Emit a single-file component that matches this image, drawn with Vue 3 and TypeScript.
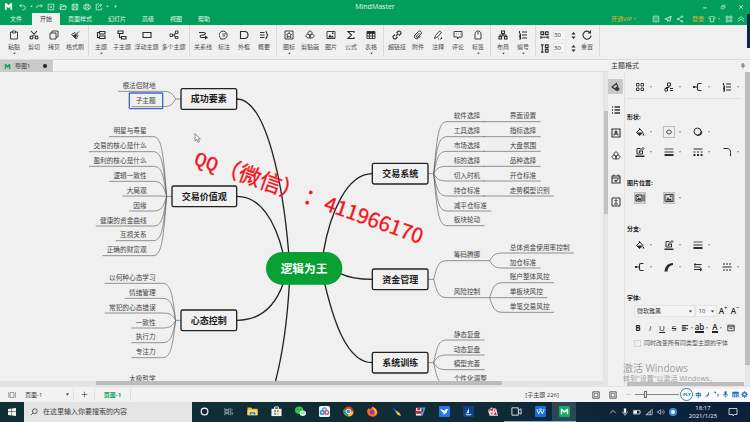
<script setup lang="ts">
import { h, ref } from 'vue'

interface Glyph { s?: string; f?: string; w?: number }

const glyphs: Record<string, Glyph> = {
  logo: { f: 'M2 3h4l4 4 4-4h4v14h-4v-7l-4 4-4-4v7H2z' },
  undo: { s: 'M6 3 2 7l4 4M2 7h9a5 5 0 0 1 0 10H8' },
  redo: { s: 'M14 3l4 4-4 4M18 7H9a5 5 0 0 0-5 6' },
  add: { s: 'M3 3h14v14H3zM10 7v6M7 10h6' },
  open: { s: 'M3 16V4h5l2 2h6v3M3 16l3-7h13l-3 7z' },
  save: { s: 'M3 3h14v14H3zM6 3v5h8V3M6 17v-5h8v5' },
  print: { s: 'M6 7V3h8v4M6 14H2V7h16v7h-4M6 12h8v5H6z' },
  share: { s: 'M9 3H3v14h14v-5M8 12c0-5 3-7 8-7M13 2l4 3-4 4' },
  more: { s: 'M6 5h8', f: 'M5 9h10l-5 6z' },
  caret: { f: 'M5 7h10l-5 6z' },
  min: { s: 'M4 13h12', w: 3 },
  restore: { s: 'M4 8h9v8H4zM8 8V4h9v8h-4' },
  close: { s: 'M4 4l12 12M16 4 4 16', w: 2.6 },
  fit: { s: 'M3 3h14v14H3zM7 9V7h2M13 11v2h-2M11 7h2v2M9 13H7v-2' },
  send: { s: 'M2 10 18 3l-3 13-6-4zM18 3 9 12v5' },
  nodes: { s: 'M7 9l6-4M7 11l6 4M3 10a2 2 0 1 0 4 0 2 2 0 1 0-4 0M13 4a2 2 0 1 0 4 0 2 2 0 1 0-4 0M13 16a2 2 0 1 0 4 0 2 2 0 1 0-4 0' },
  shirt: { s: 'M7 3 2 6l2 4 2-1v8h8V9l2 1 2-4-5-3c-1 3-5 3-6 0z' },
  grid: { s: 'M3 3h5v5H3zM12 3h5v5h-5zM3 12h5v5H3zM12 12h5v5h-5z' },
  up: { s: 'M2 11l8-7 8 7M2 17l8-7 8 7' },
  paste: { s: 'M6 4H3v14h14V4h-3M7 2h6v4H7z' },
  cut: { s: 'M4 2l10 11M16 2 6 13M2 15a3 3 0 1 0 6 0 3 3 0 1 0-6 0M12 15a3 3 0 1 0 6 0 3 3 0 1 0-6 0', w: 2.2 },
  copy: { s: 'M2 6h12v12H2zM6 6V2h12v12h-4' },
  brush: { s: 'M3 9l7-4 6 6-4 7zM13 8l5-5', f: 'M6 11l5-3 3 3-3 5z' },
  topic: { s: 'M7 3h11v5H7zM7 12h11v5H7zM7 5H3v10h4', w: 2.2 },
  subtopic: { s: 'M2 2h10v5H2zM9 13h9v5H9zM5 7v8h4', w: 2.2 },
  float: { s: 'M2 5h16v10H2z', w: 2.2 },
  multi: { s: 'M7 10h3l3-5M10 10h3M10 10l3 6M2 8h5v5H2zM13 2h5v5h-5zM13 13h5v4h-5z' },
  relation: { s: 'M2 5h9c5 0 5 4 0 5H8c-5 1-5 5 0 5h9M14 12l4 3-4 3', w: 2.2 },
  callout: { s: 'M4 17a8 8 0 1 1 6 1H3zM7 8h7M7 12h5' },
  frame: { s: 'M3 3h8a7 7 0 0 1 0 14H3z', w: 2.2 },
  summary: { s: 'M2 5h9M2 10h9M2 15h9M13 3c4 0 1 6 5 7-4 1-1 7-5 7', w: 2.2 },
  marker: { s: 'M2 2h16v16H2zM10 5l2 3 3 1-2 2 1 4-4-2-4 2 1-4-2-2 3-1z' },
  clip: { s: 'M10 10C4 10 5 2 10 2s6 8 0 8zM9 10C4 5-1 12 4 15s6-2 6-5c0 3 1 8 6 5s0-10-5-5M10 11v7' },
  image: { s: 'M2 3h16v14H2z', f: 'M4 15l4-6 3 4 2-2 3 4zM12 5h3v3h-3z' },
  sum: { s: 'M16 6V3H4l7 7-7 7h12v-3', w: 2.2 },
  table: { s: 'M2 3h16v14H2zM2 7h16M2 12h16M7 7v10M13 7v10', f: 'M2 3h16v4H2z' },
  link: { s: 'M8 12l5-5M9 6l3-3c3-3 8 2 5 5l-3 3M11 14l-3 3c-3 3-8-2-5-5l3-3', w: 2.2 },
  attach: { s: 'M13 6l-6 6c-1 2 1 4 3 2l6-6c3-4-2-8-5-5l-7 7c-4 5 3 10 7 6l4-4', w: 2 },
  note: { s: 'M3 17l2-6 8-9 4 3-8 9zM10 18h2M14 18h2M17 14v4' },
  comment: { s: 'M2 3h16v11h-6l-3 4v-4H2zM6 8h1M10 8h1M14 8h1' },
  tag: { s: 'M4 8c0-8 12-8 12 0v10H4zM10 4v5' },
  layout: { s: 'M7 2h6v5H7zM2 13h5v5H2zM13 13h5v5h-5zM10 7v6M4 13v-3h12v3', w: 2.2 },
  number: { s: 'M8 4h10M8 10h10M8 16h10M3 2v4M2 8h3v4H2M2 14h3v4H2', w: 2.2 },
  hgap: { s: 'M2 2h6v6H2zM12 2h6v6h-6zM2 14h16M2 11v6M18 11v6', w: 2.4 },
  vgap: { s: 'M12 2h6v6h-6zM12 12h6v6h-6zM5 3v14M2 2h6M2 18h6', w: 2.4 },
  spin: { f: 'M10 0l6 7H4zM10 20l6-7H4z' },
  reset: { s: 'M16 5a8 8 0 1 0 2 6M17 1v5h-5', w: 2.2 },
  pin: { s: 'M6 3h8M7 3v8M13 3v8M4 11h12M10 11v7', w: 2 },
  style: { s: 'M2 10l9-7 3 8-4 5zM11 11a3 3 0 1 0 5 3zM6 12l8 6', w: 2.2 },
  list: { s: 'M7 4h11M7 10h11M7 16h11M2 4h2M2 10h2M2 16h2', w: 2.6 },
  badge: { s: 'M2 2h16v16H2zM6 15c0-5 8-5 8 0M8 8a2 2 0 1 0 4 0 2 2 0 1 0-4 0', w: 2.2 },
  task: { s: 'M2 4h16v14H2zM2 8h16M6 1v4M14 1v4M7 12l3 3 4-5', w: 2.2 },
  upload: { s: 'M2 2h16v16H2zM10 13V6M7 8l3-3 3 3M6 14h8', w: 2 },
  tree: { s: 'M7 2h6v6H7zM2 13h5v5H2zM12 13h6M12 17h6M10 8v3H4v2', w: 2 },
  branch: { s: 'M1 10h8M17 3h-5c-2 0-3 1-3 3v8c0 2 1 3 3 3h5', w: 2.2, f: 'M0 8h4v4H0z' },
  fill: { s: 'M3 11l7-7 6 7-7 6zM8 2l3 4', f: 'M4 11h11l-6 6zM17 12l2 5h-4z', w: 2 },
  oval: { s: 'M5 10c2-5 8-5 10 0-2 5-8 5-10 0z', w: 2 },
  shadow: { s: 'M2 9a7 7 0 1 0 14 0 7 7 0 1 0-14 0', f: 'M17 6c5 9-5 15-11 10 6 1 11-3 11-10z', w: 2 },
  pen: { s: 'M15 8v6H4V3h7M8 11l1-3 7-7 2 2-7 7z', f: 'M1 17h18v3H1z', w: 2 },
  lines: { s: 'M1 4h18', f: 'M1 9h18v2H1zM1 14h18v4H1z', w: 1.6 },
  dashes: { s: 'M1 4h18M1 10h4M8 10h4M15 10h4', f: 'M1 14h4v4H1zM8 14h4v4H8zM15 14h4v4h-4z', w: 2 },
  dashes2: { s: 'M2 4h4M8 4h4M14 4h4M1 10h18M2 16h4M8 16h4M14 16h4', w: 2.4 },
  corner: { s: 'M3 3h7c5 0 7 3 7 8v7', w: 2 },
  picleft: { s: 'M2 4h12v12H2z', f: 'M4 14l3-5 3 3 2-2v4zM4 6h3v2H4zM17 3h2v14h-2z', w: 2 },
  taper: { f: 'M1 19C2 9 7 3 18 2v4C11 7 8 11 7 19z' },
  arrows: { s: 'M5 3 2 5l3 2M2 5h15M2 10h13M2 15h15M14 12l4 3-4 3', w: 2 },
  align: { s: 'M2 4h16M2 8h10M2 12h16M2 16h10', w: 2.4 },
  calendar: { s: 'M2 3h16v14H2zM2 7h16M6 11h8', w: 2 },
  board: { s: 'M5 4h10v12H5zM1 4h1v12H1M18 4h1v12h-1' },
  plus: { s: 'M10 2v16M2 10h16' },
  full: { s: 'M2 2h16v16H2zM6 6h3M6 6v3M14 6h-3M14 6v3M6 14h3M6 14v-3M14 14h-3M14 14v-3', w: 2 },
  minus: { s: 'M2 10h16' },
  moon: { f: 'M12 2c6 8-1 17-10 13 6 0 10-5 10-13z' },
  comma: { f: 'M3 4a3 3 0 1 1 5 3zM12 9c6-1 6 6 0 9 2-4 2-5 0-9z' },
  mic: { s: 'M4 9c0 8 12 8 12 0M10 15v4', f: 'M7 1h6v11H7z' },
  gear: { s: 'M5 10a5 5 0 1 0 10 0 5 5 0 1 0-10 0M10 1v3M10 16v3M1 10h3M16 10h3M4 4l2 2M14 14l2 2M16 4l-2 2M6 14l-2 2', w: 3.4 },
  windows: { f: 'M2 4l7-1v6H2zM10 3l8-1v7h-8zM2 10h7v7l-7-1zM10 10h8v8l-8-1z' },
  search: { s: 'M6 8a6 6 0 1 0 12 0A6 6 0 1 0 6 8M8 12l-6 6', w: 1.8 },
  chevron: { s: 'M3 13l7-7 7 7' },
  battery: { s: 'M1 6h16v9H1zM19 9v3', f: 'M2 7h8v7H2z' },
  wifi: { s: 'M2 17 18 3v14zM6 17v-3M10 17v-7M14 17V7', w: 1.4 },
  volume: { s: 'M2 8h3l4-4v12l-4-4H2zM12 7c2 2 2 4 0 6M15 4c4 4 4 8 0 12', w: 1.4 },
  notice: { s: 'M2 3h16v12h-5l-3 3v-3H2z', w: 1.6 },
}

const Ico = (p: { n: string }) => {
  const g = glyphs[p.n] ?? {}
  return h('svg', { viewBox: '0 0 20 20', class: 'ico', 'aria-hidden': 'true' }, [
    g.s ? h('path', { d: g.s, fill: 'none', stroke: 'currentColor', 'stroke-width': g.w ?? 1.8 }) : null,
    g.f ? h('path', { d: g.f, fill: 'currentColor' }) : null,
  ])
}
Ico.props = ['n']

const quick = ['undo', 'caret', 'redo', 'add', 'open', 'save', 'print', 'share', 'caret', 'more']
const menus = ['文件', '开始', '页面样式', '幻灯片', '高级', '视图', '帮助']
const activeMenu = ref('开始')

type Tool = [icon: string, label: string, drop?: boolean]
const ribbon: Tool[][] = [
  [['paste', '粘贴', true], ['cut', '剪切'], ['copy', '拷贝'], ['brush', '格式刷']],
  [['topic', '主题', true], ['subtopic', '子主题'], ['float', '浮动主题'], ['multi', '多个主题']],
  [['relation', '关系线'], ['callout', '标注'], ['frame', '外框'], ['summary', '概要']],
  [['marker', '图标', true], ['clip', '剪贴画'], ['image', '图片'], ['sum', '公式'], ['table', '表格', true]],
  [['link', '超链接'], ['attach', '附件'], ['note', '注释'], ['comment', '评论'], ['tag', '标签', true]],
  [['layout', '布局', true], ['number', '编号', true]],
]
const hGap = ref('30')
const vGap = ref('30')
const zoom = ref(22)
const fontName = ref('微软雅黑')
const fontSize = ref('10')
const sameType = ref(false)

const rail = ['style', 'list', 'badge', 'clip', 'task', 'upload']
const sections = [
  { title: '形状:', loose: false, rows: [['fill', 'oval', 'shadow'], ['pen', 'lines', 'dashes', 'corner']] },
  { title: '图片位置:', loose: false, rows: [['picleft', 'image']] },
  { title: '分支:', loose: true, rows: [['fill', 'pen', 'lines'], ['branch', 'taper', 'arrows', 'dashes2']] },
]

/* Mind map, in document units */
const EM = 20
const topics = [
  { t: '成功要素', x: 543, y: 266, w: 167 },
  { t: '交易价值观', x: 516, y: 558, w: 194 },
  { t: '心态控制', x: 543, y: 930, w: 167 },
  { t: '交易系统', x: 1117, y: 490, w: 167 },
  { t: '资金管理', x: 1117, y: 807, w: 167 },
  { t: '系统训练', x: 1117, y: 1057, w: 167 },
]
const trunks = [
  'M866 758C850 560 800 297 711 297',
  'M850 762C825 660 780 589 711 589',
  'M850 850C825 920 780 961 711 961',
  'M868 852C862 960 850 1060 822 1160',
  'M970 758C990 640 1040 521 1117 521',
  'M1020 820C1050 835 1080 838 1117 838',
  'M974 850C1000 960 1040 1088 1117 1088',
]
interface Leaf { t: string; x: number; y: number; d: string; left: boolean }
const leaves: Leaf[] = []

function fan(jx: number, jy: number, textX: number, left: boolean, items: [string, number][], tail = 13) {
  const k = left ? -1 : 1
  for (const [t, y] of items) {
    const end = textX + k * (t.length * EM + tail)
    const d = `M${jx} ${jy}C${jx + k * 10} ${jy + (y - jy) * 0.7} ${jx + k * 14} ${y} ${jx + k * 40} ${y}H${end}`
    leaves.push({ t, x: textX, y: y - 17, d, left })
  }
}
const rowsFrom = (names: string[], y: number): [string, number][] =>
  names.map((n, i) => [n, Math.round(y + i * 44.6)])

fan(527, 297, 467, true, [['根法侣财地', 274], ['子主题', 320]])
fan(500, 589, 440, true, rowsFrom(['明星与寿星', '交易的核心是什么', '盈利的核心是什么', '逻辑一致性', '大局观', '因缘', '健康的资金曲线', '互损关系', '正确的财富观'], 410))
fan(527, 961, 467, true, rowsFrom(['以何种心态学习', '情绪管理', '常犯的心态错误', '一致性', '执行力', '专注力'], 850))
fan(527, 1300, 467, true, [['太极哲学', 1153]])
fan(1301, 521, 1361, false, rowsFrom(['软件选择', '工具选择', '市场选择', '标的选择', '切入时机', '持仓标准', '减平仓标准', '板块轮动'], 365))
rowsFrom(['界面设置', '指标选择', '大盘氛围', '品种选择', '开仓标准', '走势模型识别'], 365).forEach(([t, y]) =>
  leaves.push({ t, x: 1529, y: y - 17, left: false, d: `M1450 ${y}H${1542 + t.length * EM}` }))
fan(1301, 838, 1361, false, [['筹码腾挪', 782], ['风险控制', 893]], 28)
fan(1469, 782, 1529, false, [['总体资金使用率控制', 759], ['加仓标准', 804]])
fan(1469, 893, 1529, false, [['账户整体风控', 848], ['单板块风控', 893], ['单笔交易风控', 937]])
fan(1301, 1088, 1361, false, rowsFrom(['静态复盘', '动态复盘', '模型完善', '个性化调整'], 1020))
const stems = ['M527 297h16', 'M500 589h16', 'M527 961h16', 'M1284 521h17', 'M1284 838h17', 'M1284 1088h17']

const ime = ['moon', 'comma', 'mic', 'table', 'gear']
const tray = ['chevron', 'mic', 'battery', 'wifi', 'volume']
</script>

<template>
  <div class="app">
    <header class="head">
      <div class="titlebar">
        <div class="quick">
          <Ico n="logo" class="brand" />
          <button v-for="(q, i) in quick" :key="i" :class="['qb', { thin: q === 'caret' }]" :aria-label="q"><Ico :n="q" /></button>
        </div>
        <span class="name">MindMaster</span>
        <div class="win">
          <button v-for="w in ['min', 'restore', 'close']" :key="w" :aria-label="w"><Ico :n="w" /></button>
        </div>
      </div>
      <div class="menubar">
        <nav class="menus">
          <button v-for="m in menus" :key="m" :class="{ on: m === activeMenu }" @click="activeMenu = m">{{ m }}</button>
        </nav>
        <div class="account">
          <a href="#" class="gold">开通VIP</a><Ico n="caret" class="c" />
          <Ico n="fit" class="first" /><Ico n="send" /><Ico n="nodes" />
          <a href="#" class="gold">登录</a>
          <Ico n="shirt" /><Ico n="caret" class="c" /><Ico n="grid" /><Ico n="up" />
        </div>
      </div>
      <div class="edge"></div>
    </header>

    <div class="ribbon">
      <div v-for="(g, gi) in ribbon" :key="gi" class="group">
        <button v-for="[icon, label, drop] in g" :key="label" :class="['tool', 'n' + label.length]">
          <Ico :n="icon" />
          <span>{{ label }}</span>
          <Ico v-if="drop" n="caret" class="drop" />
        </button>
      </div>
      <div class="group gaps">
        <div class="spins">
          <label><Ico n="hgap" /><input v-model="hGap" aria-label="水平间距" /><Ico n="spin" class="sp" /></label>
          <label><Ico n="vgap" /><input v-model="vGap" aria-label="垂直间距" /><Ico n="spin" class="sp" /></label>
        </div>
        <button class="tool n2"><Ico n="reset" /><span>重置</span></button>
      </div>
    </div>

    <div class="work">
      <main class="doc">
        <div class="tabs">
          <button class="tab"><Ico n="logo" class="tl" /><span>导图1</span><i class="dot"></i></button>
          <div class="tabfill"></div>
        </div>
        <div class="stage">
          <div class="canvas">
            <svg class="map" viewBox="0 216 1809 927" preserveAspectRatio="xMinYMin slice">
              <g class="twig">
                <path v-for="(l, i) in leaves" :key="i" :d="l.d" />
                <path v-for="s in stems" :key="s" :d="s" />
              </g>
              <g class="trunk"><path v-for="s in trunks" :key="s" :d="s" /></g>
              <text v-for="(l, i) in leaves" :key="i" :x="l.x" :y="l.y + 7" :class="['leaf', { left: l.left }]">{{ l.t }}</text>
              <rect class="select" x="388" y="279" width="100" height="47" rx="2" />
              <g v-for="n in topics" :key="n.t">
                <rect class="box" :x="n.x" :y="n.y" :width="n.w" height="62" rx="5" />
                <text class="topic" :x="n.x + n.w / 2" :y="n.y + 41">{{ n.t }}</text>
              </g>
              <rect class="root" x="798" y="756" width="229" height="98" rx="49" />
              <text class="roott" x="912" y="818">逻辑为王</text>
              <g class="contact" transform="translate(579 492) rotate(19.4)">
                <text x="0" y="0" class="qq">QQ</text>
                <text x="74" y="0" class="han">（微信）</text>
                <text x="345" y="0" class="han">：</text>
                <text x="413" y="0" class="num">411966170</text>
              </g>
              <path class="cursor" d="M585 401v22l5-5 4 9 4-2-4-8h7z" />
            </svg>
            <div class="hbar"><i></i></div>
          </div>
          <div class="vbar"><i></i></div>
        </div>
      </main>

      <aside class="side">
        <div class="sidehead"><span>主题格式</span><Ico n="pin" /></div>
        <div class="sidebody">
          <div class="rail">
            <button v-for="(r, i) in rail" :key="r" :class="{ on: i === 0 }" :aria-label="r"><Ico :n="r" /></button>
          </div>
          <div class="panel">
            <div class="row top">
              <button v-for="n in ['grid', 'tree', 'branch', 'number']" :key="n" class="opt" :aria-label="n"><Ico :n="n" /><Ico n="caret" class="c" /></button>
            </div>
            <section v-for="s in sections" :key="s.title" :class="{ loose: s.loose }">
              <h3>{{ s.title }}</h3>
              <div v-for="(r, ri) in s.rows" :key="ri" class="row">
                <button v-for="n in r" :key="n" class="opt" :aria-label="n">
                  <Ico :n="n" :class="{ framed: n === 'oval', pressed: n === 'image' || n === 'picleft' }" />
                  <Ico v-if="n !== 'picleft'" n="caret" class="c" />
                </button>
              </div>
            </section>
            <section>
              <h3>字体:</h3>
              <div class="pick">
                <label class="dd wide"><select v-model="fontName" aria-label="字体"><option>微软雅黑</option></select><Ico n="caret" /></label>
                <label class="dd"><select v-model="fontSize" aria-label="字号"><option>10</option></select><Ico n="caret" /></label>
                <button class="az">A<sup>+</sup></button><button class="az">A<sup>−</sup></button>
              </div>
              <div class="fmt">
                <button><b>B</b></button><button><em>I</em></button><button><u>U</u></button><button><s>S</s></button>
                <button><Ico n="align" /><Ico n="caret" class="c" /></button>
                <button><span class="bar">ab</span><Ico n="caret" class="c" /></button>
                <button><span class="bar">A</span><Ico n="caret" class="c" /></button>
                <button><Ico n="calendar" /></button>
              </div>
              <label class="chk"><input v-model="sameType" type="checkbox" />同时改变所有同类型主题的字体</label>
            </section>
            <div class="activate"><p>激活 Windows</p><small>转到"设置"以激活 Windows。</small></div>
            <div class="pbar"></div>
          </div>
          <div class="pv"><i></i></div>
        </div>
      </aside>
    </div>

    <footer class="pages">
      <Ico n="board" class="bd" />
      <label class="pg"><select aria-label="页面"><option>页面-1</option></select><Ico n="caret" /></label>
      <button class="plus" aria-label="新建页面"><Ico n="plus" /></button>
      <button class="cur">页面-1</button>
      <span class="count">[子主题 226]</span>
      <Ico n="full" class="fs" /><Ico n="full" class="fs" />
      <Ico n="minus" class="mi" />
      <input v-model="zoom" class="zoom" type="range" min="0" max="100" aria-label="缩放" />
      <div class="ime"><span class="fly">iFLY</span><b>中</b><Ico v-for="n in ime" :key="n" :n="n" /></div>
    </footer>

    <div class="taskbar">
      <button class="start" aria-label="开始菜单"><Ico n="windows" /></button>
      <label class="find"><Ico n="search" /><input placeholder="在这里输入你要搜索的内容" aria-label="搜索" /></label>
      <div class="apps">
        <button aria-label="Cortana"><svg viewBox="0 0 24 24"><circle cx="12" cy="12" r="9" fill="none" stroke="#fff" stroke-width="3" /></svg></button>
        <button aria-label="任务视图"><svg viewBox="0 0 24 24"><path d="M2 3v4h11V3M2 10h11v5H2zM2 22v-4h11v4M18 3v19M22 6v3M22 13v8" fill="none" stroke="#a9b9bb" stroke-width="2" /></svg></button>
        <button aria-label="文件资源管理器"><svg viewBox="0 0 24 24"><path d="M1 3h8l2 3h12v14H1z" fill="#f2b92c" /><path d="M1 9h22v11H1z" fill="#ffd766" /><path d="M6 13h12v8h-3v-4H9v4H6z" fill="#3b93d4" /></svg></button>
        <button aria-label="应用商店"><svg viewBox="0 0 24 24"><path d="M8 7V2h8v5" fill="none" stroke="#fff" stroke-width="2" /><path d="M1 6h22v16H1z" fill="#f4f4f4" /><path d="M7 9h4v4H7z" fill="#e6492d" /><path d="M13 9h4v4h-4z" fill="#6fae2b" /><path d="M7 15h4v4H7z" fill="#2a95d8" /><path d="M13 15h4v4h-4z" fill="#f5b921" /></svg></button>
        <button aria-label="微信"><svg viewBox="0 0 24 24"><ellipse cx="9" cy="9" rx="9" ry="8" fill="#2fc84a" /><ellipse cx="17" cy="16" rx="7" ry="6" fill="#dff2df" /><path d="M6 7v2M12 7v2M15 14v2M19 14v2" stroke="#176b2a" stroke-width="2" /></svg></button>
        <button aria-label="网盘"><svg viewBox="0 0 24 24"><rect width="24" height="24" rx="4" fill="#f2f7fb" /><g fill="none" stroke-width="3"><circle cx="12" cy="8" r="4" stroke="#2e9fe6" /><circle cx="7" cy="14" r="4" stroke="#2d7fd8" /><circle cx="17" cy="14" r="4" stroke="#e0525f" /></g></svg></button>
        <button aria-label="Chrome"><svg viewBox="0 0 24 24"><circle cx="12" cy="12" r="11" fill="#e0402f" /><path d="M12 12 2 7a11 11 0 0 0 9 16z" fill="#35a853" /><path d="M12 12h11a11 11 0 0 1-12 11z" fill="#fbc116" /><circle cx="12" cy="12" r="5" fill="#4285f4" stroke="#fff" stroke-width="2" /></svg></button>
        <button aria-label="Firefox"><svg viewBox="0 0 24 24"><path d="M3 5l4 2 5-6 8 6c8 11-4 20-13 15C-2 18 0 9 3 5z" fill="#ff6a1c" /><path d="M13 2c10 5 10 13 5 18 2-8-3-9-5-18z" fill="#ffc928" /><circle cx="11" cy="13" r="5" fill="#7a3bd0" /></svg></button>
        <button aria-label="行情"><svg viewBox="0 0 24 24"><path d="M1 2l14 9-4 4z" fill="#2347d8" /><path d="M9 9l10 6 3 7-8-3z" fill="#f2c530" /></svg></button>
        <button aria-label="交易终端"><svg viewBox="0 0 24 24"><path d="M2 4h12v17H2z" fill="#eee" /><path d="M1 11h12v6H1zM5 3h6v6H5z" fill="#d2202b" /><path d="M12 3h11l-6 18h-4l5-14h-6z" fill="#5a92e8" /></svg></button>
        <button aria-label="飞鸽"><svg viewBox="0 0 24 24"><rect width="24" height="24" rx="2" fill="#2877e8" /><path d="M3 6l9 5c2-4 5-5 9-4l-3 3c0 6-5 9-10 9l3-3c-4-2-7-5-8-10z" fill="#fff" /></svg></button>
        <button aria-label="航海"><svg viewBox="0 0 24 24"><rect width="24" height="24" rx="3" fill="#0d428e" /><path d="M13 5v11H7zM5 18h14l-2 2H7z" fill="#dbe7f6" /></svg></button>
        <button aria-label="纸牌"><svg viewBox="0 0 24 24"><path d="M2 9l7-6 11 3 4 15H6z" fill="#f3e8e4" /><path d="M3 10l5-5 2 2-5 5zM11 4l3 1-2 7-3-2zM16 7l3 1-4 6zM9 14h3v4H9z" fill="#c92f31" /><path d="M18 13l4 6h-7z" fill="#b01b21" /></svg></button>
        <button class="run" aria-label="录屏"><svg viewBox="0 0 24 24"><path d="M2 4h14v16H2zM16 10l6-4v12l-6-4" fill="none" stroke="#e3e8ea" stroke-width="2" /></svg></button>
        <button class="run" aria-label="WPS"><svg viewBox="0 0 24 24"><rect width="24" height="24" rx="2" fill="#176fdc" /><path d="M4 7l4 10 4-8 4 8 4-10M8 7h8" fill="none" stroke="#fff" stroke-width="2" /></svg></button>
        <button class="run on" aria-label="MindMaster"><svg viewBox="0 0 24 24"><rect width="24" height="24" rx="3" fill="#11ab66" /><path d="M4 6h3l5 5 5-5h3v12h-3v-7l-5 4-5-4v7H4z" fill="#fff" /></svg></button>
      </div>
      <div class="tray">
        <Ico v-for="n in tray" :key="n" :n="n" />
        <i class="flydot"></i>
        <div class="clock"><span>18:17</span><span>2021/1/25</span></div>
        <Ico n="notice" class="nt" />
      </div>
    </div>
  </div>
</template>

<style>
body { margin: 0; overflow: hidden; }
</style>

<style scoped>
.app {
  display: flex; flex-direction: column; height: 100vh; background: #f0f0f0; color: #3a3a3a;
  font: 6px/8px "Open Sans", "Noto Sans CJK SC", sans-serif;
}
.app * { box-sizing: border-box; }
button, input, select { font: inherit; color: inherit; background: none; border: 0; padding: 0; margin: 0; appearance: none; border-radius: 0; outline: 0; }
button { display: flex; align-items: center; justify-content: center; white-space: nowrap; }
a { color: inherit; text-decoration: none; }
.ico { width: 10px; height: 10px; flex: none; display: block; }

.head { position: relative; background: #029f5b; color: #e2f5ea; flex: none; }
.titlebar { display: grid; grid-template-columns: 1fr auto 1fr; align-items: center; height: 13px; }
.quick { display: flex; align-items: center; padding-left: 4px; }
.quick .ico { width: 8px; height: 8px; }
.quick .brand { width: 9px; height: 9px; margin-right: 4px; color: #fff; }
.qb { width: 12px; }
.qb.thin { width: 4px; }
.qb.thin .ico { width: 5px; height: 5px; }
.quick .qb:last-child .ico { width: 5px; height: 5px; }
.name { font-size: 7px; }
.win { display: flex; justify-content: flex-end; }
.win button { width: 18px; }
.win .ico { width: 6px; height: 6px; }
.menubar { display: flex; justify-content: space-between; height: 12px; }
.menus { display: flex; padding-left: 2px; }
.menus button { padding: 0 8px; }
.menus button:first-child { margin-right: 2px; }
.menus .on { background: #f0f0f0; color: #33413a; }
.account { display: flex; align-items: center; gap: 4px; padding-right: 5px; }
.account .ico { width: 8px; height: 8px; }
.account .c { width: 4px; height: 4px; margin-left: -3px; }
.account .first { margin-left: 11px; }
.gold { color: #e3b32d; padding-left: 4px; }
.edge { position: absolute; right: 0; top: 14px; width: 3px; height: 34px; background: #14234a; z-index: 2; }

.ribbon { display: flex; height: 34px; padding-left: 4px; flex: none; color: #2c2c2c; }
.group { display: flex; padding-right: 2px; margin-right: 2px; border-right: 1px solid #dadada; margin-bottom: 3px; }
.tool { flex-direction: column; justify-content: flex-start; padding-top: 5px; gap: 3px; width: 20px; }
.tool span { color: #4c4c4c; line-height: 8px; }
.n3 { width: 22px; }
.n4 { width: 27px; }
.tool .drop { width: 5px; height: 5px; margin-top: -3px; }
.gaps { padding-left: 2px; }
.spins { display: grid; align-content: start; gap: 3px; padding-top: 5px; }
.spins label { display: flex; align-items: center; height: 10px; gap: 4px; }
.spins .ico { width: 9px; height: 9px; }
.spins input { width: 13px; height: 10px; background: #f6f6f6; border: 1px solid #e6e6e6; }
.spins .sp { width: 7px; height: 7px; }

.work { display: flex; flex: 1; min-height: 0; }
.doc { flex: 1; min-width: 0; display: flex; flex-direction: column; }
.tabs { display: flex; height: 13px; border-top: 1px solid #dcdcdc; flex: none; }
.tab { width: 53px; background: #c9c9c9; color: #444; justify-content: flex-start; padding-left: 4px; gap: 4px; }
.tl { width: 7px; height: 7px; color: #14a868; }
.dot { width: 4px; height: 4px; border-radius: 50%; background: #222; margin-left: 9px; }
.tabfill { flex: 1; background: #f3f3f3; border-bottom: 1px solid #e0e0e0; }
.stage { display: flex; flex: 1; min-height: 0; }
.canvas { flex: 1; min-width: 0; display: flex; flex-direction: column; }
.map { width: 100%; flex: 1; min-height: 0; display: block; }
.hbar { height: 5px; padding-left: 16%; background: #e3e3e3; flex: none; }
.hbar i { display: block; width: 80%; height: 4px; background: #bcbcbc; }
.vbar { width: 5px; background: #e6e6e6; padding-top: 39px; }
.vbar i { display: block; height: 103px; margin-left: 1px; background: #c2c2c2; }

.twig path { fill: none; stroke: #606060; stroke-width: 2; }
.trunk path { fill: none; stroke: #222; stroke-width: 4; }
.leaf { font-size: 20px; fill: #444; }
.leaf.left { text-anchor: end; }
.box { fill: #f1f1f1; stroke: #222; stroke-width: 4; }
.topic { font-size: 27px; font-weight: 700; text-anchor: middle; fill: #1c1c1c; }
.root { fill: #07a033; }
.roott { font-size: 35px; font-weight: 700; text-anchor: middle; fill: #fff; }
.select { fill: none; stroke: #4166cf; stroke-width: 4; }
.contact { fill: #f5121a; stroke: #f5121a; stroke-width: 1; font-family: "Noto Sans CJK SC", sans-serif; }
.han { font-size: 66px; }
.num { font-size: 62px; }
.qq { font-size: 60px; font-family: "Liberation Mono", monospace; }
.cursor { fill: #fff; stroke: #555; stroke-width: 2; }

.side { width: 142px; flex: none; display: flex; flex-direction: column; }
.sidehead { display: flex; align-items: center; justify-content: space-between; height: 13px; padding: 0 4px 0 3px; border-top: 1px solid #dcdcdc; font-size: 7px; flex: none; }
.sidehead .ico { width: 6px; height: 6px; }
.sidebody { display: flex; flex: 1; min-height: 0; }
.rail { width: 15px; padding-top: 7px; display: flex; flex-direction: column; gap: 8px; color: #333; }
.rail button { height: 15px; flex: none; }
.rail .on { background: #c9c9c9; }
.panel { position: relative; flex: 1; min-width: 0; margin-left: 1px; border-left: 1px solid #e1e1e1; padding: 4px 4px 0 2px; }
.row { display: grid; grid-template-columns: repeat(3, 29px) 1fr; height: 20px; padding-left: 8px; }
.loose .row { height: 22px; }
.row.top { height: 23px; border-bottom: 1px solid #dedede; margin-bottom: -3px; }
.opt { justify-content: flex-start; gap: 4px; color: #2b2b2b; }
.opt .c { width: 4px; height: 4px; }
.framed { outline: 1px solid #bbb; }
.pressed { outline: 1px solid #c0c0c0; background: #d2d2d2; }
h3 { font-size: 6px; line-height: 8px; font-weight: 700; margin: 17px 0 1px; color: #222; }
.loose + section h3 { margin-top: 16px; }
.pick { display: flex; height: 12px; margin-left: 7px; margin-top: 3px; }
.dd { display: flex; align-items: center; width: 22px; border: 1px solid #e4e4e4; background: #f4f4f4; }
.dd.wide { width: 62px; }
.dd select, .pg select { flex: 1; min-width: 0; padding-left: 2px; }
.dd .ico, .pg .ico { width: 7px; height: 7px; }
.az { width: 12px; font-size: 8px; font-weight: 600; color: #222; }
.az sup { font-size: 6px; line-height: 6px; align-self: flex-start; }
.fmt { display: grid; grid-template-columns: repeat(4, 12px) 14px 16px 15px 12px; margin-left: 5px; height: 14px; margin-top: 4px; font-size: 8px; color: #222; }
.fmt .ico { width: 8px; height: 8px; }
.fmt .c { width: 4px; height: 4px; margin-left: 1px; }
.bar { border-bottom: 2px solid #222; font-weight: 600; line-height: 8px; }
.chk { display: flex; align-items: center; gap: 3px; margin-left: 7px; height: 12px; margin-top: 2px; color: #555; white-space: nowrap; }
.chk input { width: 7px; height: 7px; border: 1px solid #d5d5d5; }
.activate { position: absolute; left: -2px; bottom: 3px; color: #a2a2a2; white-space: nowrap; }
.activate p { margin: 0; font-size: 10px; line-height: 12px; }
.activate small { font-size: 7px; line-height: 9px; display: block; }
.pbar { position: absolute; left: 2px; right: 1px; bottom: 0; height: 4px; background: #bdbdbd; }
.pv { width: 5px; padding-bottom: 21px; background: #e6e6e6; }
.pv i { display: block; height: 100%; background: #bebebe; }

.pages { display: flex; align-items: center; height: 16px; background: #f2f2f2; flex: none; padding-left: 8px; border-top: 1px solid #e4e4e4; }
.bd { width: 8px; height: 8px; color: #777; }
.pg { display: flex; align-items: center; width: 51px; margin-left: 7px; padding-right: 2px; height: 12px; border-right: 1px solid #ddd; }
.plus { width: 21px; height: 12px; border-right: 1px solid #ddd; }
.plus .ico { width: 7px; height: 7px; }
.cur { width: 36px; height: 12px; color: #12a065; font-weight: 700; border-right: 1px solid #ddd; }
.count { margin-left: auto; margin-right: 33px; }
.fs { width: 8px; height: 8px; margin-right: 9px; }
.mi { width: 5px; height: 5px; color: #999; margin-right: 4px; }
.zoom { width: 44px; height: 8px; background: linear-gradient(#888, #888) center / 100% 1px no-repeat; }
.zoom::-webkit-slider-thumb { appearance: none; width: 3px; height: 7px; background: #f4f4f4; border: 1px solid #666; }
.ime { display: flex; align-items: center; justify-content: space-between; width: 70px; height: 12px; background: #fafafa; color: #1763c4; margin-left: 1px; padding-right: 2px; font-size: 6px; }
.ime .ico { width: 7px; height: 7px; }
.fly { width: 13px; height: 13px; border: 1px solid #2a80d0; border-radius: 50%; font-size: 4px; line-height: 11px; text-align: center; font-weight: 700; background: #fff; flex: none; }

.taskbar { display: flex; height: 20px; flex: none; background: linear-gradient(90deg, #0f2f33, #102c36 60%, #0c1f3c); color: #f0f4f5; }
.start { width: 24px; }
.find { display: flex; align-items: center; gap: 5px; width: 168px; padding-left: 6px; background: #e4e4e4; color: #333; }
.find .ico { width: 8px; height: 8px; }
.find input { flex: 1; min-width: 0; font-size: 7px; }
.find input::placeholder { color: #3c3c3c; opacity: 1; }
.apps { display: flex; flex: 1; }
.apps button { width: 24px; border-bottom: 1px solid transparent; }
.apps svg { width: 11px; height: 11px; }
.apps button:nth-child(-n+2) svg { width: 9px; height: 9px; }
.apps .run { border-bottom: 1px solid #73b4e6; }
.apps .on { background: #2c4753; }
.tray { display: flex; align-items: center; gap: 4px; }
.tray .ico { width: 8px; height: 8px; }
.flydot { width: 8px; height: 8px; border-radius: 50%; background: #e8f2fb; border: 2px solid #3a8fe0; }
.clock { display: grid; text-align: center; width: 38px; line-height: 8px; font-size: 6px; margin-left: 3px; }
.tray .nt { width: 10px; height: 10px; margin: 0 12px 0 2px; }
</style>
